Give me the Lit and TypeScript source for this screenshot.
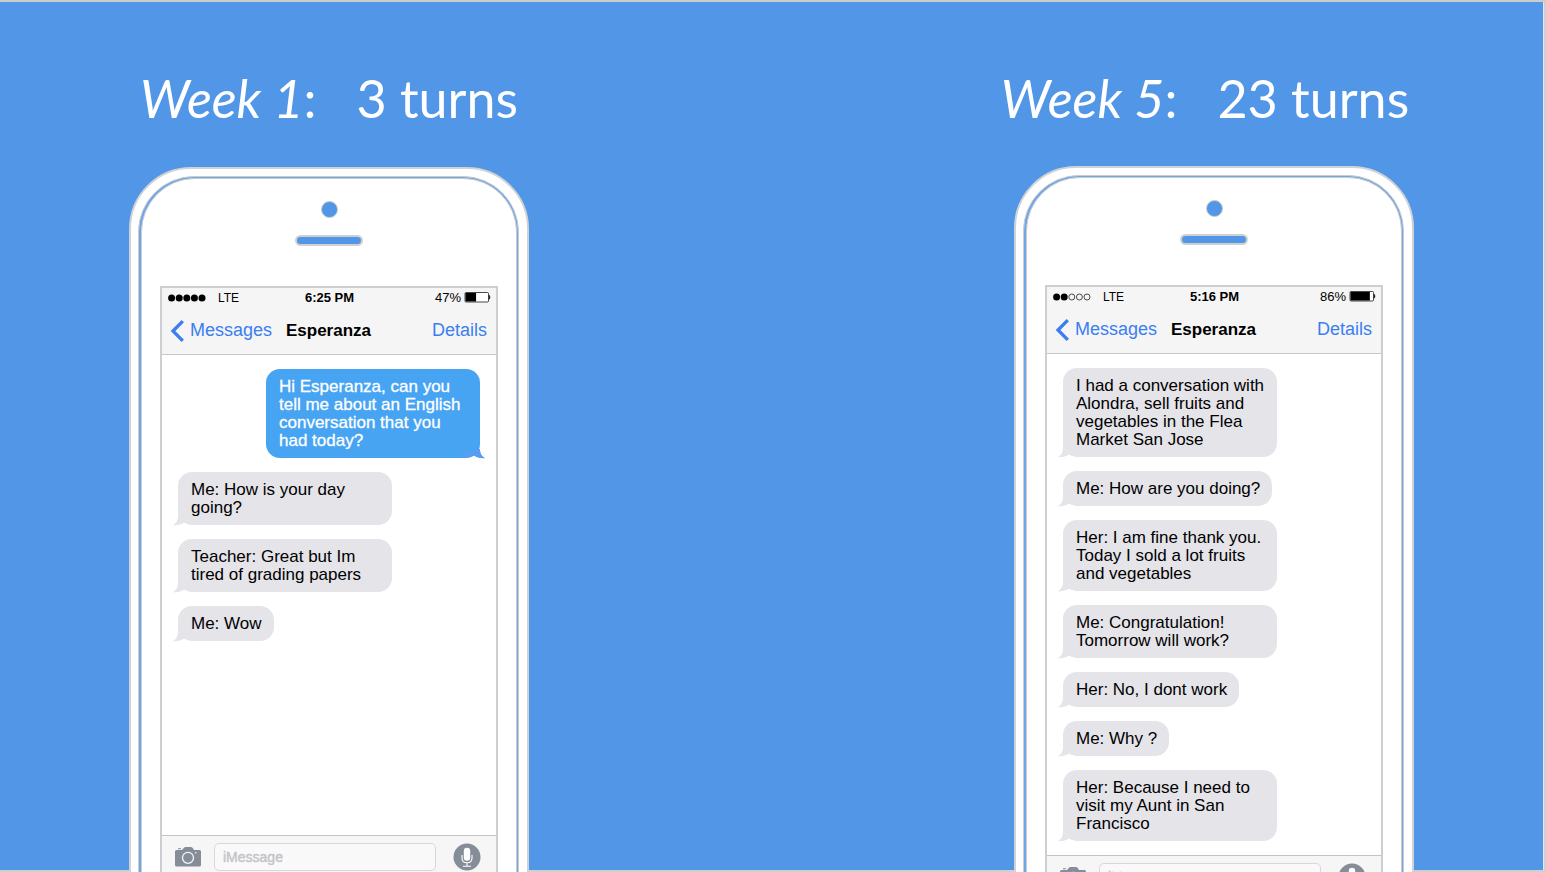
import { LitElement, html, css, svg } from "lit";
import { customElement, property } from "lit/decorators.js";

interface Message {
  text: string;
  sent?: boolean;
}

@customElement("chat-bubble")
class ChatBubble extends LitElement {
  @property({ type: Boolean, reflect: true }) sent = false;

  static styles = css`
    :host {
      display: block;
      position: relative;
      align-self: flex-start;
      box-sizing: border-box;
      max-width: 214px;
      padding: 9px 12px 8px 13px;
      border-radius: 14px;
      background: #e5e4e9;
      color: #000;
      font-size: 17px;
      line-height: 18px;
    }
    :host([sent]) {
      align-self: flex-end;
      background: #46a4f3;
      color: #fff;
      -webkit-text-stroke: 0.3px #fff;
    }
    .tail {
      position: absolute;
      left: -6px;
      bottom: -1px;
      width: 25px;
      height: 17px;
      fill: #e5e4e9;
    }
    :host([sent]) .tail {
      left: auto;
      right: -6px;
      transform: scaleX(-1);
      fill: #5a9df0;
    }
    .notch {
      fill: #fff;
    }
  `;

  render() {
    return html`<slot></slot>
      <svg class="tail" viewBox="0 0 25 17" aria-hidden="true">
        ${this.sent
          ? svg`<path d="M6 9H24V16H6Z" opacity=".7"/>`
          : svg`<path d="M6 2H12V13H6Z"/>`}
        <path d="M6 7C6 11 4.500 14 .5 16.500C5 16.700 9 15.700 12 13.800V7Z" />
        <path class="notch" d="M.5 16.700C5 16.700 9 15.700 12 13.800C14 15 16 15.800 19 16V17H.5Z" />
      </svg>`;
  }
}

@customElement("phone-mockup")
class PhoneMockup extends LitElement {
  @property() time = "";
  @property({ type: Number }) battery = 100;
  @property({ type: Number }) signal = 5;
  @property() contact = "";
  @property({ attribute: false }) messages: Message[] = [];

  static styles = css`
    :host {
      display: block;
      box-sizing: border-box;
      width: 400px;
      padding: 7px 8px 7px 7px;
      border: 2px solid #d0d2d5;
      border-radius: 62px 62px 56px 56px;
      background: #fff;
      font-family: "Liberation Sans", Arial, Helvetica, sans-serif;
    }
    .rim {
      padding: 1px 1px 1px 2px;
      border: 1px solid #ccc;
      border-radius: 56px;
      background: #6ea6ea;
    }
    .face {
      display: flex;
      flex-direction: column;
      align-items: center;
      padding: 22px 18px 110px;
      border: 1px solid #ccc;
      border-radius: 54px;
      background: #fff;
    }
    .lens {
      box-sizing: border-box;
      width: 17px;
      height: 17px;
      border: 1px solid #ccc;
      border-radius: 50%;
      background: #5296e7;
    }
    .speaker {
      box-sizing: border-box;
      width: 68px;
      height: 11px;
      margin: 17px 0 40px;
      border: 2px solid #d0d0d0;
      border-radius: 6px;
      background: #5296e7;
    }
    .screen {
      align-self: stretch;
      border: 2px solid #ccced2;
      background: #fff;
    }
    .top {
      border-bottom: 1px solid #c8c8c8;
      background: #f5f5f5;
    }
    .status,
    .nav {
      display: grid;
      grid-template-columns: 1fr auto 1fr;
      align-items: center;
    }
    .status {
      height: 19px;
      padding: 0 5px 0 6px;
      font-size: 13px;
    }
    .network,
    .power {
      display: flex;
      align-items: center;
    }
    .network {
      gap: 12px;
      font-size: 12px;
    }
    .power {
      justify-content: flex-end;
      gap: 3px;
    }
    .clock {
      font-weight: bold;
    }
    .nav {
      height: 47px;
      padding: 0 9px 0 8px;
      font-size: 18px;
    }
    .back,
    .details {
      color: #3b7ef2;
      text-decoration: none;
    }
    .back {
      display: flex;
      align-items: center;
      gap: 5px;
    }
    .details {
      justify-self: end;
    }
    .contact {
      margin: 0;
      font-size: 17px;
      line-height: 20px;
    }
    .chat {
      display: flex;
      flex-direction: column;
      gap: 14px;
      box-sizing: border-box;
      min-height: 480px;
      padding: 14px 16px;
    }
    .composer {
      display: grid;
      grid-template-columns: 28px 1fr 28px;
      align-items: center;
      gap: 0 12px;
      padding: 7px 15px 7px 12px;
      border-top: 1px solid #c4c4c4;
      background: #f6f6f6;
    }
    .icon {
      display: flex;
      padding: 0;
      border: 0;
      background: none;
    }
    .field {
      box-sizing: border-box;
      width: calc(100% - 5px);
      min-width: 0;
      height: 28px;
      padding: 0 8px;
      border: 1px solid #d8d8da;
      border-radius: 5px;
      background: #f9f9f9;
      font: 14px "Liberation Sans", Arial, sans-serif;
    }
    .field::placeholder {
      color: #c3c3c8;
      -webkit-text-stroke: 0.4px #c3c3c8;
      opacity: 1;
    }
    svg {
      display: block;
    }
  `;

  render() {
    const dots = [0, 1, 2, 3, 4];
    return html`
      <div class="rim">
        <div class="face">
          <div class="lens"></div>
          <div class="speaker"></div>
          <section class="screen" aria-label="Conversation with ${this.contact}">
            <header class="top">
              <div class="status">
                <span class="network">
                  <svg width="38" height="8" viewBox="0 0 38 8" aria-hidden="true">
                    ${dots.map((i) =>
                      i < this.signal
                        ? svg`<circle cx=${3.6 + i * 7.6} cy="4" r="3.500"/>`
                        : svg`<circle cx=${3.6 + i * 7.6} cy="4" r="3" fill="none" stroke="#222" stroke-width=".8"/>`
                    )}
                  </svg>
                  LTE
                </span>
                <span class="clock">${this.time}</span>
                <span class="power">
                  ${this.battery}%
                  <svg width="27" height="11" viewBox="0 0 27 11" aria-hidden="true">
                    <rect x="1" y=".5" width="23.500" height="9.500" rx="1" fill="#fff" stroke="#333" stroke-width=".9" />
                    <rect x="1.500" y="1" width=${(22.5 * this.battery) / 100} height="8.500" />
                    <path d="M25.300 3.300Q26.600 5.250 25.300 7.200Z" stroke="#000" stroke-width=".6" />
                  </svg>
                </span>
              </div>
              <nav class="nav">
                <a class="back" href="#messages">
                  <svg width="15" height="22" viewBox="0 0 15 22" aria-hidden="true">
                    <path d="M12.800 1.200L3 11L12.800 20.800" fill="none" stroke="#3b7ef2" stroke-width="3.300" />
                  </svg>
                  Messages
                </a>
                <h2 class="contact">${this.contact}</h2>
                <a class="details" href="#details">Details</a>
              </nav>
            </header>
            <div class="chat">
              ${this.messages.map(
                (m) => html`<chat-bubble ?sent=${m.sent ?? false}>${m.text}</chat-bubble>`
              )}
            </div>
            <form class="composer">
              <button class="icon" type="button" aria-label="Take photo">
                <svg width="28" height="20" viewBox="0 0 28 20">
                  <path
                    fill="#858d99"
                    d="M2.500 3H8L10 .8Q10.500 0 11.500 0H17Q18 0 18.500 .8L20 3H25.500Q27 3 27 4.500V18Q27 19.500 25.500 19.500H2.500Q1 19.500 1 18V4.500Q1 3 2.500 3ZM4 1.200H7V2.200H4Z"
                  />
                  <circle cx="14" cy="10.800" r="5.500" fill="#858d99" stroke="#f6f6f6" stroke-width="1.300" />
                  <circle cx="21.700" cy="5.800" r=".8" fill="#f6f6f6" />
                </svg>
              </button>
              <input class="field" type="text" placeholder="iMessage" aria-label="iMessage" />
              <button class="icon" type="button" aria-label="Record audio">
                <svg width="28" height="28" viewBox="0 0 28 28">
                  <circle cx="14" cy="14" r="13.500" fill="#858d99" />
                  <rect x="10.800" y="4.800" width="6.400" height="13" rx="3.200" fill="#fff" />
                  <path
                    d="M9 12V15Q9 19.800 14 19.800Q19 19.800 19 15V12M14 20V23M10 23.200H18"
                    fill="none"
                    stroke="#fff"
                    stroke-width="1.100"
                  />
                </svg>
              </button>
            </form>
          </section>
        </div>
      </div>
    `;
  }
}

@customElement("app-root")
class AppRoot extends LitElement {
  static styles = css`
    :host {
      display: block;
      height: 100vh;
      overflow: hidden;
      background: #5296e7;
      box-shadow: inset 0 2px #ccc, inset -2px -2px #d0d0d0, inset -3px 0 #e4e8ee;
    }
    .slide {
      display: flex;
      justify-content: space-between;
      padding: 64px 132px 0 129px;
    }
    .week {
      display: flex;
      flex-direction: column;
      gap: 35px;
      width: 400px;
    }
    .later {
      gap: 34px;
    }
    .title {
      display: flex;
      justify-content: center;
      margin: 0;
      color: #fff;
      font: 400 52px/68px Lato, sans-serif;
      white-space: pre;
    }
    .later .title {
      padding-right: 18px;
    }
  `;

  private first: Message[] = [
    { text: "Hi Esperanza, can you tell me about an English conversation that you had today?", sent: true },
    { text: "Me: How is your day going?" },
    { text: "Teacher: Great but Im tired of grading papers" },
    { text: "Me: Wow" },
  ];

  private fifth: Message[] = [
    { text: "I had a conversation with Alondra, sell fruits and vegetables in the Flea Market San Jose" },
    { text: "Me: How are you doing?" },
    { text: "Her: I am fine thank you. Today I sold a lot fruits and vegetables" },
    { text: "Me: Congratulation! Tomorrow will work?" },
    { text: "Her: No, I dont work" },
    { text: "Me: Why ?" },
    { text: "Her: Because I need to visit my Aunt in San Francisco" },
  ];

  render() {
    return html`
      <main class="slide">
        <section class="week">
          <h1 class="title"><em>Week 1</em>:   3 turns</h1>
          <phone-mockup time="6:25 PM" battery="47" signal="5" contact="Esperanza" .messages=${this.first}></phone-mockup>
        </section>
        <section class="week later">
          <h1 class="title"><em>Week 5</em>:   23 turns</h1>
          <phone-mockup time="5:16 PM" battery="86" signal="2" contact="Esperanza" .messages=${this.fifth}></phone-mockup>
        </section>
      </main>
    `;
  }
}
